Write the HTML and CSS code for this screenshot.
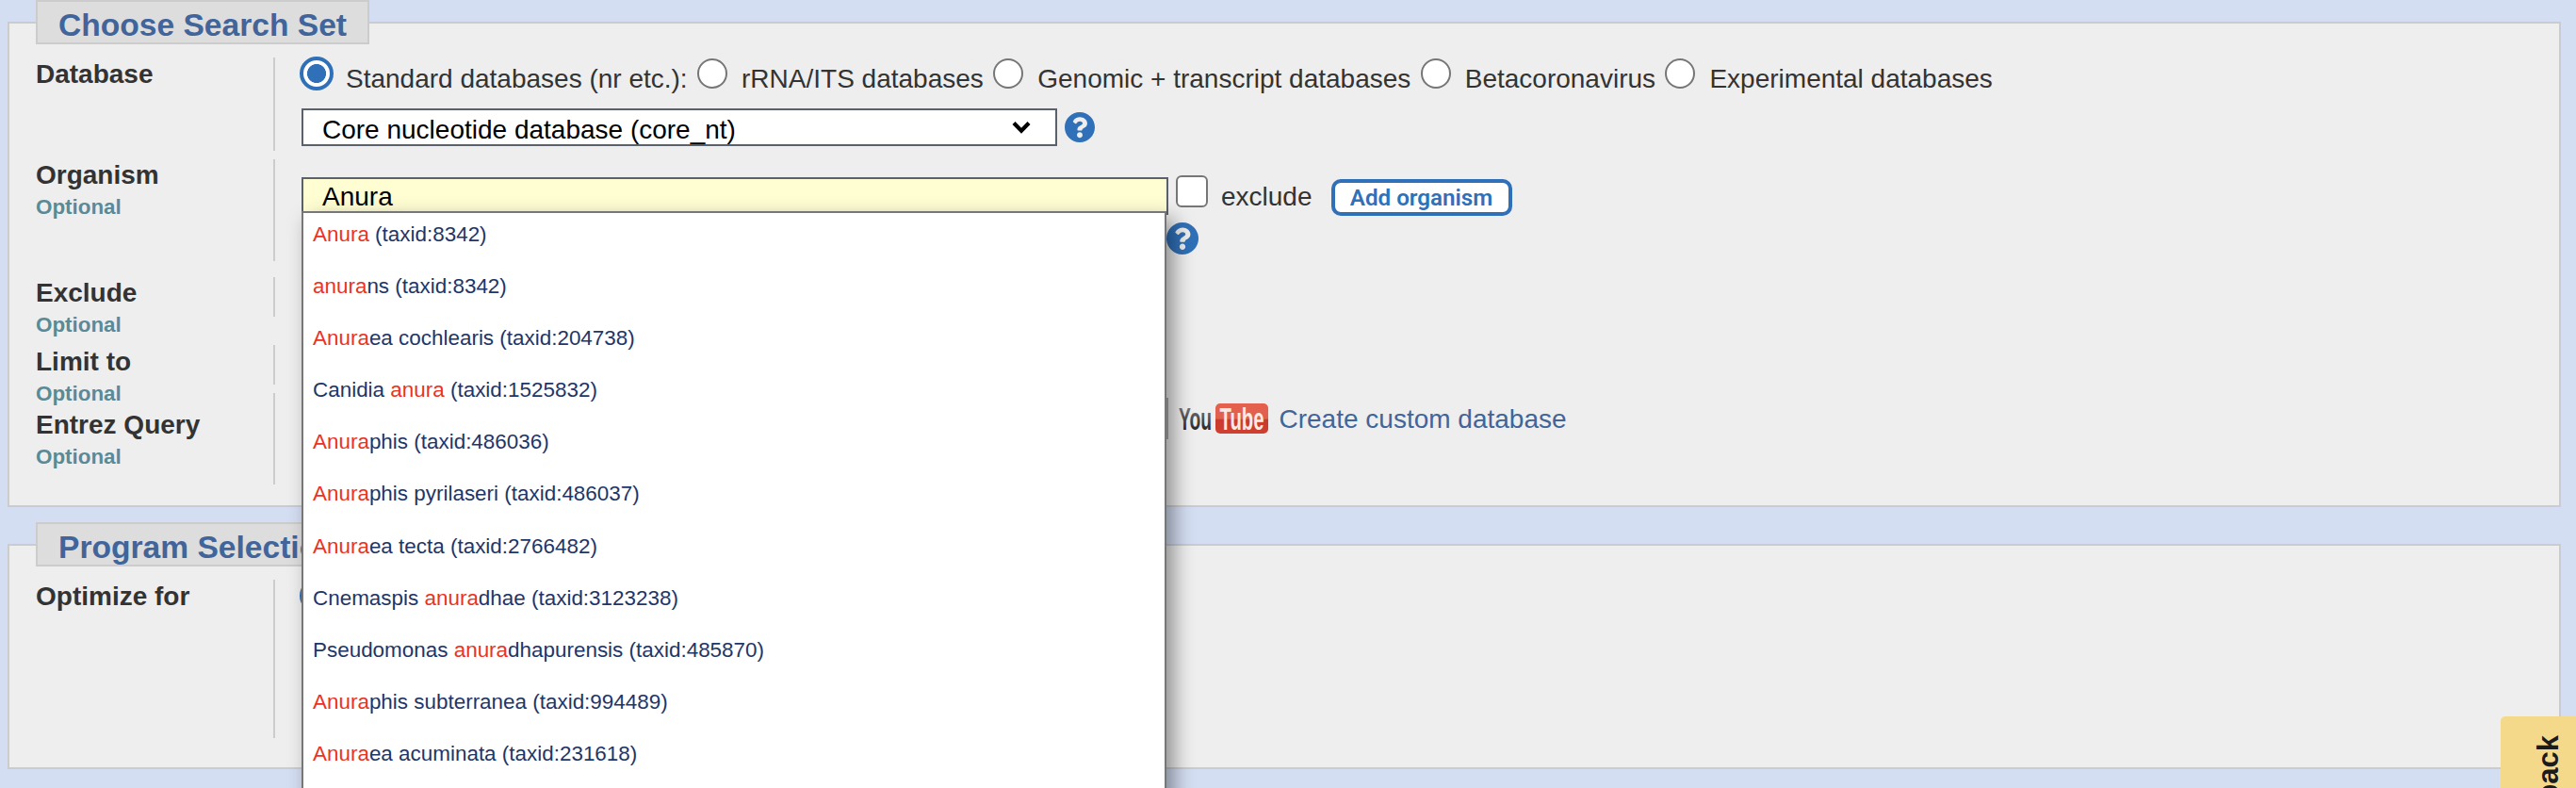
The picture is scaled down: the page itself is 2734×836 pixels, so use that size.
FILE: index.html
```html
<!DOCTYPE html>
<html lang="en">
<head>
<meta charset="utf-8">
<title>Nucleotide BLAST</title>
<link rel="stylesheet" href="styles.css">
</head>
<body>
<svg class="defs" width="0" height="0"><symbol id="help" viewBox="8 8 496 496"><path d="M504 256c0 136.997-111.043 248-248 248S8 392.997 8 256C8 119.083 119.043 8 256 8s248 111.083 248 248zM262.655 90c-54.497 0-89.255 22.957-116.549 63.758-3.536 5.286-2.353 12.415 2.715 16.258l34.699 26.31c5.205 3.947 12.621 3.008 16.665-2.122 17.864-22.658 30.113-35.797 57.303-35.797 20.429 0 45.698 13.148 45.698 32.958 0 14.976-12.363 22.667-32.534 33.976C247.128 238.528 216 254.941 216 296v4c0 6.627 5.373 12 12 12h56c6.627 0 12-5.373 12-12v-1.333c0-28.462 83.186-29.647 83.186-106.667 0-58.002-60.165-102-116.531-102zM256 338c-25.365 0-46 20.635-46 46 0 25.364 20.635 46 46 46s46-20.636 46-46c0-25.364-20.635-46-46-46z"/></symbol></svg>

<section class="panel panel-search">
  <h2 class="legend">Choose Search Set</h2>

  <div class="row row-database">
    <div class="label">Database</div>
    <div class="value">
      <div class="radios">
        <span class="radio checked"></span><span class="radio-text first">Standard databases (nr etc.):</span>
        <span class="radio"></span><span class="radio-text">rRNA/ITS databases</span>
        <span class="radio"></span><span class="radio-text">Genomic + transcript databases</span>
        <span class="radio"></span><span class="radio-text">Betacoronavirus</span>
        <span class="radio"></span><span class="radio-text">Experimental databases</span>
      </div>
      <div class="select-line">
        <div class="select"><span>Core nucleotide database (core_nt)</span>
          <svg class="chevron" width="20" height="14" viewBox="0 0 20 14"><path d="M2 2.5 10 10.8 18 2.5" fill="none" stroke="#000" stroke-width="4.2"/></svg>
        </div>
        <svg class="help" width="32" height="32"><use href="#help"/></svg>
      </div>
    </div>
  </div>

  <div class="row row-organism">
    <div class="label">Organism<small>Optional</small></div>
    <div class="value">
      <div class="organism-line">
        <div class="combo">
          <div class="input">Anura</div>
          <ul class="suggest">
            <li><b>Anura</b> (taxid:8342)</li>
            <li><b>anura</b>ns (taxid:8342)</li>
            <li><b>Anura</b>ea cochlearis (taxid:204738)</li>
            <li>Canidia <b>anura</b> (taxid:1525832)</li>
            <li><b>Anura</b>phis (taxid:486036)</li>
            <li><b>Anura</b>phis pyrilaseri (taxid:486037)</li>
            <li><b>Anura</b>ea tecta (taxid:2766482)</li>
            <li>Cnemaspis <b>anura</b>dhae (taxid:3123238)</li>
            <li>Pseudomonas <b>anura</b>dhapurensis (taxid:485870)</li>
            <li><b>Anura</b>phis subterranea (taxid:994489)</li>
            <li><b>Anura</b>ea acuminata (taxid:231618)</li>
          </ul>
        </div>
        <span class="checkbox"></span>
        <span class="exclude">exclude</span>
        <span class="button">Add organism</span>
      </div>
      <svg class="help help-organism" width="34" height="34"><use href="#help"/></svg>
    </div>
  </div>

  <div class="row row-exclude"><div class="label">Exclude<small>Optional</small></div><div class="value"></div></div>
  <div class="row row-limit"><div class="label">Limit to<small>Optional</small></div><div class="value"></div></div>
  <div class="row row-entrez">
    <div class="label">Entrez Query<small>Optional</small></div>
    <div class="value entrez-line">
      <div class="entrez-input"></div>
      <svg class="youtube" width="98" height="34" viewBox="0 0 98 34">
        <defs><linearGradient id="tube" x1="0" y1="0" x2="0" y2="1"><stop offset="0" stop-color="#e5604d"/><stop offset=".5" stop-color="#e0604e"/><stop offset=".55" stop-color="#c83a2a"/><stop offset="1" stop-color="#cf4030"/></linearGradient>
        <linearGradient id="you" x1="0" y1="0" x2="0" y2="1"><stop offset="0" stop-color="#888"/><stop offset="1" stop-color="#111"/></linearGradient></defs>
        <rect x="40" y="1" width="56" height="32" rx="5" fill="url(#tube)"/>
        <text class="yt-text" x="1" y="29" textLength="35" lengthAdjust="spacingAndGlyphs" fill="url(#you)">You</text>
        <text class="yt-text" x="44.5" y="28.5" textLength="47" lengthAdjust="spacingAndGlyphs" fill="#fbe9e6">Tube</text>
      </svg>
      <a class="custom">Create custom database</a>
    </div>
  </div>
</section>

<section class="panel panel-program">
  <h2 class="legend">Program Selection</h2>
  <div class="row row-optimize">
    <div class="label">Optimize for</div>
    <div class="value"><div class="radios"><span class="radio checked"></span></div></div>
  </div>
</section>

<div class="feedback"><span>Feedback</span></div>
</body>
</html>
```

FILE: styles.css
```css
* { box-sizing: border-box; }
html, body { height: 100%; overflow: hidden; }
body {
  margin: 0;
  padding-top: 23px;
  background: #d4def2;
  color: #333;
  font-family: "Liberation Sans", Arial, sans-serif;
  font-size: 28px;
  line-height: 32px;
  white-space: nowrap;
  position: relative;
}
.defs { position: absolute; }

.panel {
  margin: 0 16px 0 8px;
  padding-left: 28px;
  border: 2px solid #ccc;
  background: #eee;
}
.panel-search { height: 515px; }
.panel-program { height: 239px; margin-top: 39px; }
.legend {
  width: fit-content;
  height: 47px;
  margin: -25px 0 14px;
  padding: 5px 22px 0;
  border: 2px solid #ccc;
  background: #ddd;
  color: #41659a;
  font-size: 33.6px;
  line-height: 40px;
}
.panel-search .legend { width: 354px; }

.row { display: flex; }
.label { width: 252px; font-weight: bold; padding-top: 2px; }
.label small {
  display: block;
  color: #5b8a97;
  font-size: 22.4px;
  line-height: 36px;
}
.value { flex: 1; border-left: 2px solid #ccc; padding-left: 28px; }
.row-database { height: 99px; margin-bottom: 9px; }
.row-organism { height: 108px; margin-bottom: 17px; }
.row-organism .label { padding-top: 1px; }
.row-exclude { height: 42px; margin-bottom: 30px; }
.row-exclude .label { padding-top: 1px; }
.row-limit { height: 42px; margin-bottom: 9px; }
.row-entrez { height: 97px; }
.row-entrez .label { padding-top: 18px; }
.row-optimize { height: 168px; }

.radios { display: flex; align-items: flex-start; height: 54px; }
.radio {
  width: 32px;
  height: 32px;
  margin: 1px 15px 0 10.4px;
  border: 2px solid #767676;
  border-radius: 50%;
  background: #fff;
}
.radio.checked {
  width: 36px;
  height: 36px;
  margin: -1px 13px 0 -2px;
  border: 4px solid #3070b8;
  background: radial-gradient(circle, #3070b8 9.7px, #fff 10.3px);
}
.radio-text { padding-top: 7px; }

.select-line { display: flex; gap: 8px; }
.select {
  display: flex;
  justify-content: space-between;
  width: 802px;
  height: 40px;
  padding: 5px 26px 0 20px;
  border: 2px solid #5b616b;
  background: #fff;
  color: #000;
}
.chevron { margin-top: 6px; }
.help { fill: #3070b8; display: block; }
.select-line .help { margin-top: 4px; }

.organism-line { display: flex; padding-top: 17px; height: 67px; }
.combo { position: relative; width: 920px; margin-top: 2px; }
.input {
  height: 40px;
  padding: 3px 20px 0;
  border: 2px solid #5b616b;
  background: #fffed3;
  color: #000;
}
.suggest {
  position: absolute;
  z-index: 2;
  left: 0;
  top: 36px;
  width: 918px;
  height: 700px;
  margin: 0;
  padding: 0 0 0 10px;
  list-style: none;
  border: 2px solid #777;
  background: #fff;
  color: #1e3668;
  font-size: 22.44px;
  line-height: 45px;
  box-shadow: 8px 8px 20px rgba(0, 0, 0, .4);
}
.suggest li { height: 55.1px; }
.suggest b { color: #ea3323; font-weight: normal; }
.checkbox {
  width: 34px;
  height: 34px;
  margin-left: 8px;
  border: 2px solid #767676;
  border-radius: 6px;
  background: #fff;
}
.exclude { margin: 7px 20px 0 14px; }
.button {
  width: 192px;
  height: 39px;
  margin-top: 4px;
  border: 4px solid #3070b8;
  border-radius: 10px;
  background: #fff;
  color: #3070b8;
  font: 600 24.2px/32px Roboto, sans-serif;
  text-align: center;
}
.help-organism { margin-left: 918px; }

.entrez-line { display: flex; }
.entrez-input {
  width: 920px;
  height: 44px;
  margin-top: 5px;
  border: 2px solid #aaa;
}
.youtube { margin: 10px 0 0 10px; }
.yt-text { font: bold 33px "Liberation Sans Narrow", "Liberation Sans", sans-serif; }
.custom { margin: 12px 0 0 9.5px; color: #41659a; }

.feedback {
  position: absolute;
  z-index: 3;
  right: 0;
  top: 760px;
  width: 80px;
  height: 76px;
  overflow: hidden;
  border-radius: 5px 0 0 0;
  background: #f5d98b;
  color: #1b1b1b;
  font-weight: bold;
  font-size: 31px;
}
.feedback span {
  display: block;
  writing-mode: vertical-rl;
  transform: rotate(180deg);
  height: 160px;
  margin: 20px 0 0 35px;
  text-align: right;
}
```
